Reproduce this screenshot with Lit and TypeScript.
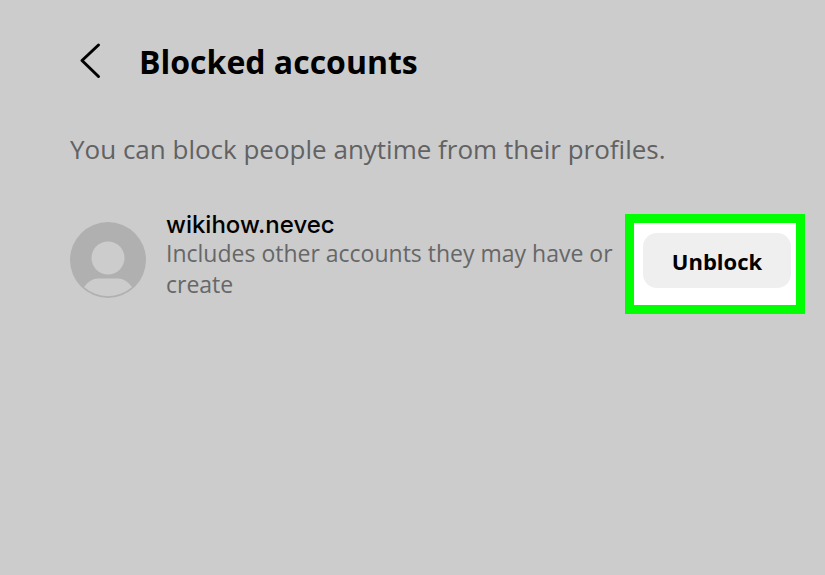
import { LitElement, html, css } from "lit";
import { customElement } from "lit/decorators.js";

@customElement("app-root")
export class AppRoot extends LitElement {
  static styles = css`
    :host {
      display: block;
      min-height: 100vh;
      box-sizing: border-box;
      padding: 36px 20px 36px 70px;
      background: #ccc;
      color: #000;
      font-family: "Open Sans", "Noto Sans", sans-serif;
    }
    .header {
      display: flex;
      align-items: center;
      gap: 27px;
    }
    .back {
      display: flex;
      padding: 4px 0;
      border: 0;
      background: none;
      color: inherit;
      cursor: pointer;
    }
    h1 {
      margin: 0;
      font-size: 32px;
      line-height: 52px;
      font-weight: 700;
    }
    .intro {
      margin: 40px 0 44px;
      font-size: 26px;
      line-height: 42px;
      color: #616263;
    }
    .accounts {
      margin: 0;
      padding: 0;
      list-style: none;
    }
    .account {
      display: flex;
      align-items: flex-start;
    }
    .avatar {
      flex: none;
      margin: 8px 20px 0 0;
    }
    .info {
      flex: 1;
      min-width: 0;
      padding-right: 12px;
    }
    .name {
      margin: 0 0 2px;
      font: 500 24px/22px Inter, sans-serif;
    }
    .note {
      margin: 0;
      font-size: 23px;
      line-height: 31px;
      color: #666768;
    }
    .frame {
      flex: none;
      padding: 10px 5px 17px 9px;
      border: 9px solid #0f0;
      background: #fff;
    }
    .unblock {
      display: block;
      width: 148px;
      height: 55px;
      padding: 0;
      border: 0;
      border-radius: 14px;
      background: #efefef;
      color: #000;
      font: inherit;
      font-size: 22px;
      font-weight: 700;
      cursor: pointer;
    }
  `;

  render() {
    return html`
      <header class="header">
        <button class="back" type="button" aria-label="Back">
          <svg width="42" height="42" viewBox="0 0 42 42" fill="none" stroke="currentColor"
            stroke-width="3" stroke-linecap="round" stroke-linejoin="round">
            <path d="M28.500 4 L12 19.500 L28.500 35.500" />
          </svg>
        </button>
        <h1>Blocked accounts</h1>
      </header>
      <p class="intro">You can block people anytime from their profiles.</p>
      <ul class="accounts">
        <li class="account">
          <svg class="avatar" width="76" height="76" viewBox="0 0 76 76" aria-hidden="true">
            <circle cx="38" cy="38" r="38" fill="#b0b0b0" />
            <circle cx="38" cy="36" r="16.500" fill="#ccc" />
            <path d="M14 65 Q20 56.500 28 56.500 H48 Q56 56.500 62 65 A36 36 0 0 1 14 65 Z" fill="#ccc" />
          </svg>
          <div class="info">
            <p class="name">wikihow.nevec</p>
            <p class="note">Includes other accounts they may have or create</p>
          </div>
          <div class="frame">
            <button class="unblock" type="button">Unblock</button>
          </div>
        </li>
      </ul>
    `;
  }
}
